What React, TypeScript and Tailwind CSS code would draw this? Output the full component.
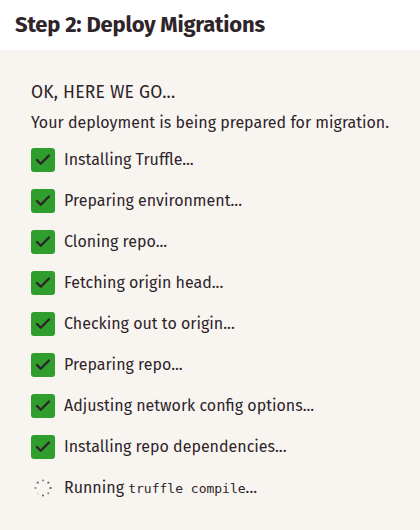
import { Check } from "lucide-react";

const steps = [
  "Installing Truffle...",
  "Preparing environment...",
  "Cloning repo...",
  "Fetching origin head...",
  "Checking out to origin...",
  "Preparing repo...",
  "Adjusting network config options...",
  "Installing repo dependencies...",
];

function Spinner() {
  const dots = [0, 1, 2, 3, 4, 5, 6, 7];
  return (
    <svg width="24" height="24" viewBox="0 0 24 24">
      {dots.map((i) => {
        const a = (i / 8) * Math.PI * 2 - Math.PI / 2;
        return (
          <circle
            key={i}
            cx={12 + Math.cos(a) * 7.5}
            cy={12 + Math.sin(a) * 7.5}
            r={1.1}
            fill="#3a3035"
            opacity={i === 5 ? 0.15 : 0.55 + (i % 3) * 0.15}
          />
        );
      })}
    </svg>
  );
}

export default function App() {
  return (
    <div
      className="w-[420px] h-[530px] bg-white text-[#2e2429]"
      style={{ fontFamily: '"Fira Sans", "Open Sans", "Noto Sans", sans-serif' }}
    >
      <div className="h-[50px] px-[15px] pt-[10px]">
        <h1 className="text-[22px] font-bold leading-[30px] tracking-[-0.2px]">
          Step 2: Deploy Migrations
        </h1>
      </div>
      <div className="h-[480px] bg-[#f8f5f1] px-[31px] pt-[30px]">
        <div className="text-[17.5px] leading-[26px] tracking-[0.2px]">OK, HERE WE GO...</div>
        <div className="mt-[5px] whitespace-nowrap text-[16px] leading-[24px]">
          Your deployment is being prepared for migration.
        </div>
        <ul className="mt-[13px] flex flex-col gap-[17px]">
          {steps.map((s) => (
            <li key={s} className="flex items-center gap-[9px] h-[24px]">
              <span className="flex h-[24px] w-[24px] items-center justify-center rounded-[3px] bg-[#2f9e2c]">
                <Check className="h-[18px] w-[18px] text-[#2e2429]" strokeWidth={3.2} />
              </span>
              <span className="text-[16px]">{s}</span>
            </li>
          ))}
          <li className="flex items-center gap-[9px] h-[24px]">
            <Spinner />
            <span className="text-[16px]">
              Running{" "}
              <code
                className="text-[13px]"
                style={{ fontFamily: '"DejaVu Sans Mono", "Liberation Mono", monospace' }}
              >
                truffle compile
              </code>
              ...
            </span>
          </li>
        </ul>
      </div>
    </div>
  );
}
